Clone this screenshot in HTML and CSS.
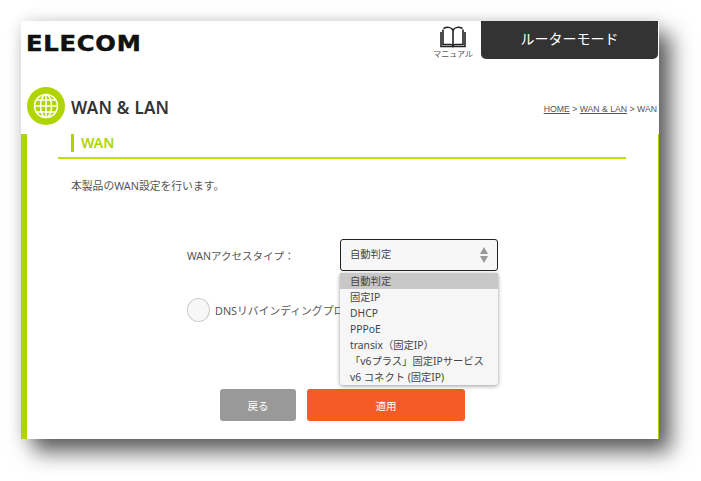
FILE: index.html
```html
<!DOCTYPE html>
<html>
<head>
  <title>WAN &amp; LAN</title>
  <link rel="stylesheet" href="styles.css">
</head>
<body>

  <div class="window">
    <header class="top">
      <div class="logo">ELECOM</div>
      <div class="manual">
        <svg class="book" width="26" height="22" viewBox="0 0 26 22" fill="none" stroke="#222" stroke-width="1.6">
          <path d="M3 3.5V18.5H11C12 18.5 12.6 19 13 20C13.4 19 14 18.5 15 18.5H23V3.5"/>
          <path d="M1 6V20.5H25V6"/>
          <path d="M13 4V20"/>
          <path d="M3.5 2.5C7 .8 11 1 13 4C15 1 19 .8 22.5 2.5"/>
        </svg>
        <span>マニュアル</span>
      </div>
      <div class="mode">ルーターモード</div>
    </header>

    <div class="title-row">
      <div class="circle">
        <svg width="26" height="26" viewBox="0 0 26 26" fill="none" stroke="#fff" stroke-width="1.5">
          <circle cx="13" cy="13" r="11.5"/>
          <ellipse cx="13" cy="13" rx="5.5" ry="11.5"/>
          <path d="M13 1.5V24.5M1.5 13H24.5M3.2 7H22.8M3.2 19H22.8"/>
        </svg>
      </div>
      <h1>WAN &amp; LAN</h1>
      <div class="crumbs"><a>HOME</a> &gt; <a>WAN &amp; LAN</a> &gt; WAN</div>
    </div>

    <main class="content">
      <h2><span>WAN</span></h2>
      <p class="desc">本製品のWAN設定を行います。</p>

      <div class="form-row">
        <label>WANアクセスタイプ：</label>
        <div class="select-wrap">
          <div class="select">
            自動判定
            <div class="arrows"><i class="up"></i><i class="down"></i></div>
          </div>
          <ul class="options">
            <li class="selected">自動判定</li>
            <li>固定IP</li>
            <li>DHCP</li>
            <li>PPPoE</li>
            <li>transix（固定IP）</li>
            <li>「v6プラス」固定IPサービス</li>
            <li>v6 コネクト (固定IP)</li>
          </ul>
        </div>
      </div>

      <div class="toggle-row">
        <div class="toggle"></div>
        <span>DNSリバインディングプロ</span>
      </div>

      <div class="buttons">
        <button class="back">戻る</button>
        <button class="apply">適用</button>
      </div>
    </main>
  </div>

</body>
</html>
```

FILE: styles.css
```css
* {
  box-sizing: border-box;
}
html, body {
  height: 100%;
}
body {
  margin: 0;
  padding: 21px 0 0 21px;
  background: #fff;
  font-family: "Noto Sans", "Noto Sans CJK JP", sans-serif;
  color: #555;
}
.window {
  width: 638px;
  height: 418px;
  background: #fff;
  display: flex;
  flex-direction: column;
  box-shadow: 12px 13px 20px rgba(0, 0, 0, 0.62), 0 0 14px rgba(0, 0, 0, 0.12);
}
.top {
  height: 65px;
  display: flex;
  align-items: flex-start;
}
.logo {
  margin: 11px 0 0 5px;
  font-family: "DejaVu Sans", sans-serif;
  font-weight: bold;
  font-size: 22px;
  line-height: 24px;
  letter-spacing: 0.7px;
  color: #111;
  -webkit-text-stroke: 0.5px #111;
  transform: scaleX(1.1);
  transform-origin: left;
}
.manual {
  margin-left: auto;
  margin-right: 8px;
  padding-top: 5px;
  display: flex;
  flex-direction: column;
  align-items: center;
  font-size: 8px;
  line-height: 12px;
  color: #555;
}
.book {
  display: block;
}
.mode {
  width: 177px;
  height: 38px;
  margin-right: 1px;
  background: #333;
  color: #fff;
  border-radius: 0 0 5px 5px;
  text-align: center;
  font-size: 14px;
  line-height: 36px;
}
.title-row {
  height: 48px;
  display: flex;
  align-items: center;
  padding-left: 6px;
  padding-bottom: 9px;
}
.circle {
  width: 38px;
  height: 38px;
  border-radius: 50%;
  background: #aed500;
  display: flex;
  align-items: center;
  justify-content: center;
}
h1 {
  margin: 3px 0 0 6px;
  font-size: 17px;
  letter-spacing: 0.25px;
  font-weight: 600;
  color: #333;
}
.crumbs {
  margin-left: auto;
  margin-right: 2px;
  margin-top: 7px;
  font-family: "Liberation Sans", sans-serif;
  font-size: 8.7px;
  color: #555;
}
.crumbs a {
  text-decoration: underline;
}
.content {
  flex: 1;
  border-left: 6px solid #aed500;
  border-right: 1px solid #aed500;
  padding: 0 32px 0 31px;
}
h2 {
  margin: 0;
  height: 25px;
  border-bottom: 2px solid #bfe000;
  padding-left: 13px;
  font-size: 14px;
  line-height: 18px;
  font-weight: 600;
  color: #aed500;
}
h2 span {
  display: block;
  border-left: 3px solid #aed500;
  padding-left: 7px;
}
.desc {
  margin: 20px 0 0 13px;
  font-size: 10.8px;
  line-height: 14px;
}
.form-row {
  margin: 46px 0 0 129px;
  display: flex;
  align-items: center;
}
label {
  width: 153px;
  font-size: 10.5px;
}
.select-wrap {
  position: relative;
}
.select {
  width: 158px;
  height: 32px;
  padding: 0 0 3px 9px;
  border: 1.5px solid #222;
  border-radius: 3px;
  background: #f7f7f7;
  display: flex;
  align-items: center;
  justify-content: space-between;
  font-size: 10.3px;
  color: #444;
}
.arrows {
  margin: 3px 9px 0 0;
  display: flex;
  flex-direction: column;
  gap: 2px;
}
.arrows i {
  display: block;
  border-left: 4px solid transparent;
  border-right: 4px solid transparent;
}
.arrows .up {
  border-bottom: 7px solid #999;
}
.arrows .down {
  border-top: 7px solid #999;
}
.options {
  position: absolute;
  top: 34px;
  left: 0;
  width: 158px;
  margin: 0;
  padding: 0;
  list-style: none;
  background: #f6f6f6;
  border-radius: 3px;
  box-shadow: 0 1px 4px rgba(0, 0, 0, 0.4);
  font-size: 10.3px;
  color: #444;
}
.options li {
  height: 16px;
  line-height: 16px;
  padding-left: 10px;
  white-space: nowrap;
}
.options .selected {
  background: #c8c8c8;
}
.toggle-row {
  margin: 27px 0 0 129px;
  display: flex;
  align-items: center;
  gap: 5px;
  font-size: 10.8px;
  white-space: nowrap;
}
.toggle {
  width: 23px;
  height: 24px;
  border: 1px solid #ccc;
  border-radius: 50%;
  background: #f7f7f7;
}
.buttons {
  margin: 67px 0 0 162px;
  display: flex;
  gap: 11px;
}
.buttons button {
  height: 32px;
  border: none;
  border-radius: 3px;
  color: #fff;
  font-family: inherit;
  font-size: 10.5px;
}
.back {
  width: 76px;
  background: #999;
}
.apply {
  width: 158px;
  background: #f45b25;
}
```
